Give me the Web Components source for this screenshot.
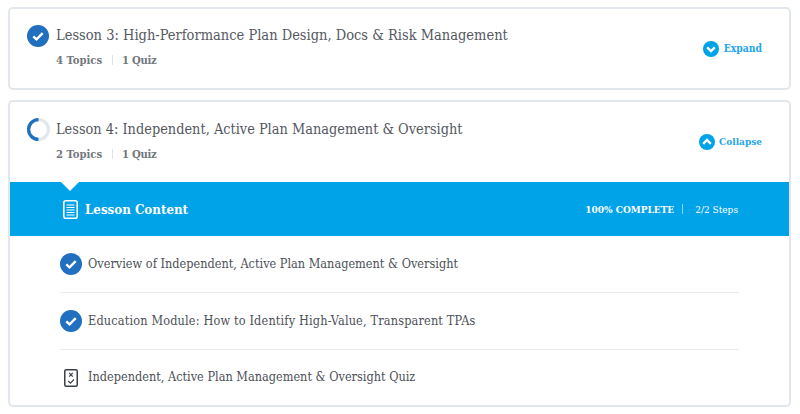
<!DOCTYPE html>
<html><head><meta charset="utf-8"><style>
html,body{margin:0;padding:0;background:#fff}
body{padding:7px 9px 0 8px;font-family:"DejaVu Serif Condensed","DejaVu Serif","Liberation Serif",serif;height:407px;overflow:hidden}
</style></head><body>
<lesson-list>
<lesson-card title-text="Lesson 3: High-Performance Plan Design, Docs &amp; Risk Management" topics="4 Topics" quiz="1 Quiz" status="done" toggle="Expand"></lesson-card>
<lesson-card title-text="Lesson 4: Independent, Active Plan Management &amp; Oversight" topics="2 Topics" quiz="1 Quiz" status="progress" toggle="Collapse">
<content-band></content-band>
<step-row kind="done">Overview of Independent, Active Plan Management &amp; Oversight</step-row>
<step-row kind="done" wide>Education Module: How to Identify High-Value, Transparent TPAs</step-row>
<step-row kind="quiz" last>Independent, Active Plan Management &amp; Oversight Quiz</step-row>
</lesson-card>
</lesson-list>
<script>
const CHECK=`<svg width="22" height="22" viewBox="0 0 22 22"><circle cx="11" cy="11" r="11" fill="#2070bf"/><path d="M6.3 11.3l3.2 3 6.2-6.2" fill="none" stroke="#fff" stroke-width="2.4"/></svg>`;
const RING=`<svg width="23" height="23" viewBox="0 0 23 23"><circle cx="11.5" cy="11.5" r="9.9" fill="none" stroke="#e2e7ed" stroke-width="3.2"/><path d="M11.5 1.6A9.9 9.9 0 0 0 11.5 21.4" fill="none" stroke="#2070bf" stroke-width="3.2"/></svg>`;
const QUIZ=`<svg width="14" height="18" viewBox="0 0 14 18"><rect x=".75" y=".75" width="12.5" height="16.5" rx="1.5" fill="#fff" stroke="#3a3f46" stroke-width="1.5"/><path d="M5.2 3.8l3.6 3.8M8.8 3.8l-3.6 3.8" stroke="#3a3f46" stroke-width="1.2"/><path d="M4.3 12l2.2 2.1 3.4-3.6" fill="none" stroke="#3a3f46" stroke-width="1.1"/></svg>`;
const chev=d=>`<svg width="16" height="16" viewBox="0 0 16 16"><circle cx="8" cy="8" r="8" fill="#00a2e8"/><path d="${d}" fill="none" stroke="#fff" stroke-width="2.4"/></svg>`;
class LessonCard extends HTMLElement{
 connectedCallback(){
  const a=n=>this.getAttribute(n);
  const s=this.attachShadow({mode:"open"});
  const open=a("toggle")==="Collapse";
  s.innerHTML=`<style>
  :host{display:block;box-sizing:border-box;border:2px solid #e2e7ed;border-radius:5px;background:#fff}
  .head{display:flex;align-items:center;justify-content:space-between;box-sizing:border-box;padding:0 27px 0 17px;height:${open?80:79}px}
  .left{display:flex;flex-direction:column;gap:6px;align-self:flex-start;padding-top:16px}
  .tl{display:flex;align-items:center;gap:${open?6:7}px}
  .ic{display:flex;flex:none}
  .ic svg{display:block}
  .t{font-size:${open?14.4:14.5}px;color:#55585f;white-space:nowrap;position:relative;top:-1px}
  .sub{display:flex;align-items:center;margin-left:29px;font-size:11.2px;font-weight:700;color:#73777e;height:14px}
  .sep{width:1px;height:10px;background:#dfe3e8;margin:0 9px 0 10px}
  .sub span:last-child{letter-spacing:-.3px}
  .tg{display:flex;align-items:center;gap:${open?4:5}px;color:#1fa6ea;font-size:${open?10:10.3}px;font-weight:700}
  .tg svg{display:block}
  .tg span{position:relative;top:-1px}
  </style>
  <div class="head"><div class="left"><div class="tl"><span class="ic">${a("status")==="done"?CHECK:RING}</span><span class="t">${a("title-text").replace(/&/g,"&amp;")}</span></div>
  <div class="sub"><span>${a("topics")}</span><span class="sep"></span><span>${a("quiz")}</span></div></div>
  <div class="tg">${open?chev("M4.2 9.8L8 6l3.8 3.8"):chev("M4.2 6.3L8 10.1l3.8-3.8")}<span>${a("toggle")}</span></div></div>
  <slot></slot>`;
 }
}
class ContentBand extends HTMLElement{
 constructor(){super();const s=this.attachShadow({mode:"open"});
 s.innerHTML=`<style>
 :host{display:flex;align-items:center;justify-content:space-between;position:relative;height:54px;background:#00a2e8;color:#fff;padding:0 51px 0 53px}
 .n{position:absolute;left:51px;top:0;width:0;height:0;border:9px solid transparent;border-top-color:#fff;border-bottom:0}
 .l{display:flex;align-items:center;gap:7px;font-size:13.2px;font-weight:700}
 .r{display:flex;align-items:center;font-size:10px}
 b{font-weight:700}i{display:block;width:1px;height:10px;background:#8fd3f3;margin:0 12px 0 8px}
 svg{display:block}
 </style><span class="n"></span><div class="l"><svg width="15" height="19" viewBox="0 0 15 19"><rect x=".8" y=".8" width="13.4" height="17.4" rx="2" fill="none" stroke="#fff" stroke-width="1.6"/><path d="M3.5 5h8M3.5 7.5h8M3.5 10h8M3.5 12.5h8M3.5 15h8" stroke="#fff" stroke-width="1.1"/></svg><span>Lesson Content</span></div>
 <div class="r"><b>100% COMPLETE</b><i></i><span>2/2 Steps</span></div>`;}
}
class StepRow extends HTMLElement{
 connectedCallback(){const s=this.attachShadow({mode:"open"});const q=this.getAttribute("kind")==="quiz";const last=this.hasAttribute("last");
 s.innerHTML=`<style>
 :host{display:block;padding:0 50px}
 .r{display:flex;align-items:center;gap:6px;box-sizing:border-box;height:${last?55:57}px;border-bottom:${last?"0":"1px solid #e9ecef"};font-size:12.6px;color:#4c5058;white-space:nowrap}
 .ic{width:22px;display:flex;justify-content:center}
 .x{position:relative;top:-1px;letter-spacing:${this.hasAttribute("wide")?".16px":"0"}}
 svg{display:block}
 </style><div class="r"><span class="ic">${q?QUIZ:CHECK}</span><span class="x"><slot></slot></span></div>`;}
}
customElements.define("lesson-card",LessonCard);
customElements.define("content-band",ContentBand);
customElements.define("step-row",StepRow);
customElements.define("lesson-list",class extends HTMLElement{constructor(){super();this.attachShadow({mode:"open"}).innerHTML=`<style>:host{display:flex;flex-direction:column;gap:10px}</style><slot></slot>`}});
</script>
</body></html>
